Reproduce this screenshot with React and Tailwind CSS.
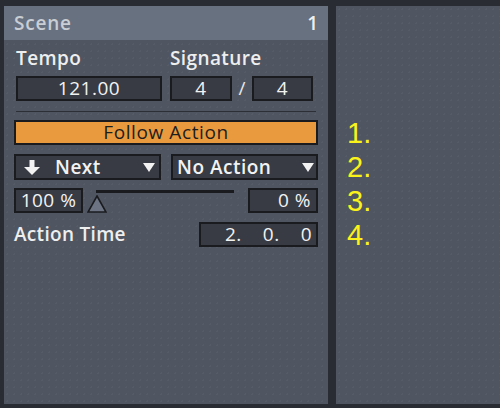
import React from 'react';

// Scene clip view, Follow Action section
const SCENE = {
  name: 'Scene',
  index: 1,
  tempo: '121.00',
  sigNum: '4',
  sigDen: '4',
  actionA: 'Next',
  actionB: 'No Action',
  chanceA: '100 %',
  chanceB: '0 %',
  actionTime: ['2.', '0.', '0'],
};

const BOX = 'h-[25px] border-2 border-[#1a1b1f] bg-[#383b43] flex items-center text-[#f2f2f2] text-[19px] leading-none font-medium tracking-[0.5px]';

const Caret = () => (
  <svg width="12" height="9" viewBox="0 0 12 9" className="shrink-0">
    <polygon points="0,0 12,0 6,9" fill="#f2f2f2" />
  </svg>
);

const DownArrow = () => (
  <svg width="16" height="15" viewBox="0 0 16 15" className="shrink-0">
    <rect x="5.5" y="0" width="5" height="8" fill="#f2f2f2" />
    <polygon points="0,7 16,7 8,15" fill="#f2f2f2" />
  </svg>
);

const App = () => {
  return (
    <div
      className="w-[500px] h-[408px] bg-[#2a2c33] flex gap-2 pl-1 pt-[6px] overflow-hidden"
      style={{ fontFamily: '"Open Sans", Lato, sans-serif' }}
    >
      {/* Scene panel */}
      <div className="w-[324px] h-[398px] flex flex-col bg-[#4f5561] bg-[radial-gradient(#565c67_1px,transparent_1px)] bg-[size:7px_7px]">
        <div className="h-[34px] bg-[#687180] flex items-center justify-between pl-[10px] pr-[9px] text-[#c9cdd4] text-[19px] font-semibold tracking-[0.8px]">
          <span>{SCENE.name}</span>
          <span className="text-[#eceef1]">{SCENE.index}</span>
        </div>

        <div className="px-[10px] pt-2 flex flex-col">
          {/* Tempo / Signature */}
          <div className="flex pl-[2px] text-[19px] leading-[20px] font-semibold tracking-[0.4px] text-[#eeeeee]">
            <span className="w-[154px]">Tempo</span>
            <span>Signature</span>
          </div>
          <div className="flex items-center h-[25px] mt-2 pl-[2px]">
            <div className={`${BOX} w-[146px] justify-center`}>{SCENE.tempo}</div>
            <div className={`${BOX} w-[62px] justify-center ml-2`}>{SCENE.sigNum}</div>
            <span className="w-5 text-center text-[#e8e8e8] text-[19px] leading-none">/</span>
            <div className={`${BOX} w-[61px] justify-center`}>{SCENE.sigDen}</div>
          </div>
          <div className="h-px bg-[#2c2f36] mt-[10px] ml-[2px] mr-[2px]" />

          {/* Follow Action */}
          <div className="mt-2 h-[25px] border-2 border-[#1a1b1f] bg-[#e99a3e] flex items-center justify-center text-[#1e1e1e] text-[19px] leading-none font-medium tracking-[0.6px]">
            Follow Action
          </div>

          <div className="flex justify-between mt-[9px]">
            <div className={`${BOX} h-[26px] w-[147px] pl-[8px] pr-[4px] font-semibold`}>
              <DownArrow />
              <span className="ml-[15px] flex-1">{SCENE.actionA}</span>
              <Caret />
            </div>
            <div className={`${BOX} h-[26px] w-[147px] pl-[4px] pr-[2px] font-semibold`}>
              <span className="flex-1">{SCENE.actionB}</span>
              <Caret />
            </div>
          </div>

          <div className="flex items-start h-[25px] mt-2">
            <div className={`${BOX} w-[69px] justify-center text-[18px]`}>{SCENE.chanceA}</div>
            <div className="relative w-[165px] h-[25px] flex-none">
              <div className="absolute left-[13px] top-[2px] w-[138px] h-[3px] bg-[#1a1b1f]" />
              <svg width="20" height="18" viewBox="0 0 20 18" className="absolute left-[4px] top-[7px]">
                <polygon points="10,1 19,17 1,17" fill="#6c7483" stroke="#1a1b1f" strokeWidth="1.6" strokeLinejoin="miter" />
              </svg>
            </div>
            <div className={`${BOX} flex-1 justify-end pr-[5px] text-[18px]`}>{SCENE.chanceB}</div>
          </div>

          <div className="flex items-center justify-between h-[25px] mt-[9px]">
            <span className="text-[19px] leading-[25px] font-semibold tracking-[0.3px] text-[#eeeeee]">Action Time</span>
            <div className={`${BOX} w-[119px] justify-end pr-[4px] gap-[21px]`}>
              {SCENE.actionTime.map((t, i) => (
                <span key={i}>{t}</span>
              ))}
            </div>
          </div>
        </div>
      </div>

      {/* Annotation panel */}
      <div
        className="flex-1 h-[398px] bg-[#4f5561] bg-[radial-gradient(#565c67_1px,transparent_1px)] bg-[size:7px_7px] pt-[110px] pl-[11px]"
        style={{ fontFamily: '"Liberation Sans", sans-serif' }}
      >
        {['1.', '2.', '3.', '4.'].map((n) => (
          <div key={n} className="h-[34px] text-[29px] leading-[34px] text-[#fbf21a]">
            {n}
          </div>
        ))}
      </div>
    </div>
  );
};

export default App;
